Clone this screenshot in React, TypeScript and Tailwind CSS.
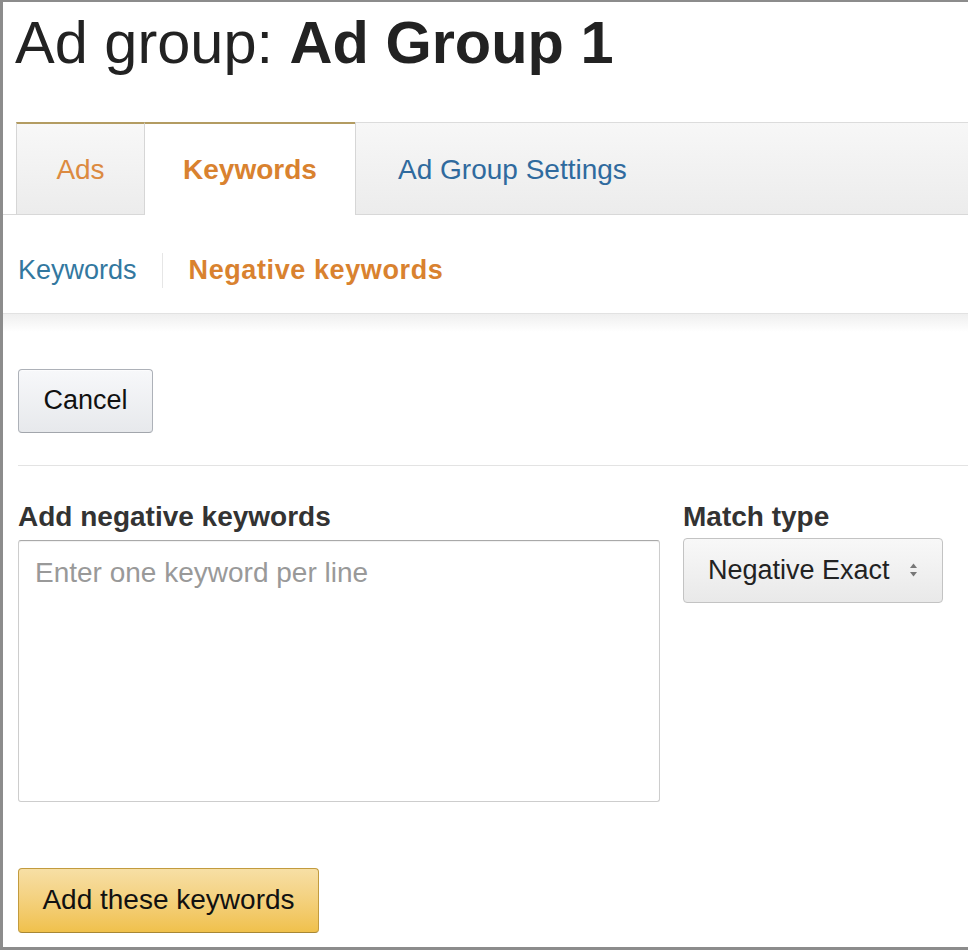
import React from 'react';

function UpDownArrows() {
  return (
    <svg width="9" height="16" viewBox="0 0 9 16" className="shrink-0">
      <path d="M4.5 1.5 L8 6 L1 6 Z" fill="#777" />
      <path d="M4.5 14.5 L8 10 L1 10 Z" fill="#777" />
    </svg>
  );
}

export default function App() {
  return (
    <div className="h-[950px] w-[968px] overflow-hidden border-t-2 border-b-[3px] border-l-[3px] border-[#8c8c8c] bg-white font-['Liberation_Sans',Arial,sans-serif] text-[27px] text-[#222]">
      {/* page title */}
      <h1 className="pl-[12px] pt-[11px] text-[59.5px] leading-none font-normal text-[#222]">
        Ad group: <span className="font-bold">Ad Group 1</span>
      </h1>

      {/* tabs */}
      <div className="mt-[49px] flex h-[93px] border-b border-[#d8d8d8] pl-[13px] text-[28px]">
        <div className="-mb-px flex w-[129px] items-center justify-center border-x border-b border-t-2 border-x-[#d6d6d6] border-b-[#d8d8d8] border-t-[#b39c62] bg-linear-to-b from-[#f8f8f8] to-[#ececec] pt-[2px] text-[#dc8a40]">
          Ads
        </div>
        <div className="-mb-px flex w-[210px] items-center justify-center border-t-2 border-b border-t-[#b39c62] border-b-white bg-white pt-[2px] font-bold text-[#d9822f]">
          Keywords
        </div>
        <div className="-mb-px flex flex-1 items-center border-l border-t border-b border-l-[#d6d6d6] border-t-[#dcdcdc] border-b-[#d8d8d8] bg-linear-to-b from-[#f7f7f7] to-[#ececec] pl-[42px] pt-[3px] text-[#2f6a9e]">
          Ad Group Settings
        </div>
      </div>

      {/* sub navigation */}
      <div className="flex h-[99px] items-center border-b border-[#e2e2e2] pl-[15px] pt-[14px]">
        <span className="text-[#33789f]">Keywords</span>
        <span className="ml-[25px] mr-[26px] h-[35px] w-px bg-[#e6e6e6]" />
        <span className="font-bold tracking-[0.6px] text-[#d9822f]">Negative keywords</span>
      </div>
      <div className="h-[18px] bg-linear-to-b from-[#efefef] to-white" />

      {/* cancel */}
      <div className="pl-[15px] pt-[37px]">
        <button className="flex h-[64px] w-[135px] items-center justify-center rounded-[4px] border border-[#adb1b8] border-b-[#a2a6ac] bg-linear-to-b from-[#f7f8fa] to-[#e7e9ec] text-[#111] shadow-[0_1px_0_rgba(255,255,255,0.6)_inset]">
          Cancel
        </button>
      </div>

      <div className="ml-[15px] mt-[32px] border-t border-[#e3e3e3]" />

      {/* form */}
      <div className="flex gap-[23px] pl-[15px] pt-[37px]">
        <div className="flex flex-col">
          <label className="mb-[9px] text-[28px] leading-none font-bold text-[#333]">Add negative keywords</label>
          <div className="h-[262px] w-[642px] rounded-[3px] border border-[#cdcdcd] border-t-[#a9a9a9] px-[16px] pt-[11px] text-[28px] text-[#999] shadow-[0_1px_1px_rgba(0,0,0,0.06)_inset]">
            Enter one keyword per line
          </div>
        </div>
        <div className="flex flex-col">
          <label className="mb-[7px] text-[28px] leading-none font-bold text-[#333]">Match type</label>
          <div className="flex h-[65px] w-[260px] items-center justify-between rounded-[4px] border border-[#c3c3c3] bg-linear-to-b from-[#f8f8f8] to-[#e9e9e9] pl-[24px] pr-[24px] text-[#222]">
            <span>Negative Exact</span>
            <UpDownArrows />
          </div>
        </div>
      </div>

      {/* submit */}
      <div className="pl-[15px] pt-[66px]">
        <button className="flex h-[65px] w-[301px] items-center justify-center rounded-[4px] border border-[#c29b3e] border-b-[#a88734] bg-linear-to-b from-[#f7dfa5] to-[#f0c14b] text-[28px] text-[#111]">
          Add these keywords
        </button>
      </div>
    </div>
  );
}
